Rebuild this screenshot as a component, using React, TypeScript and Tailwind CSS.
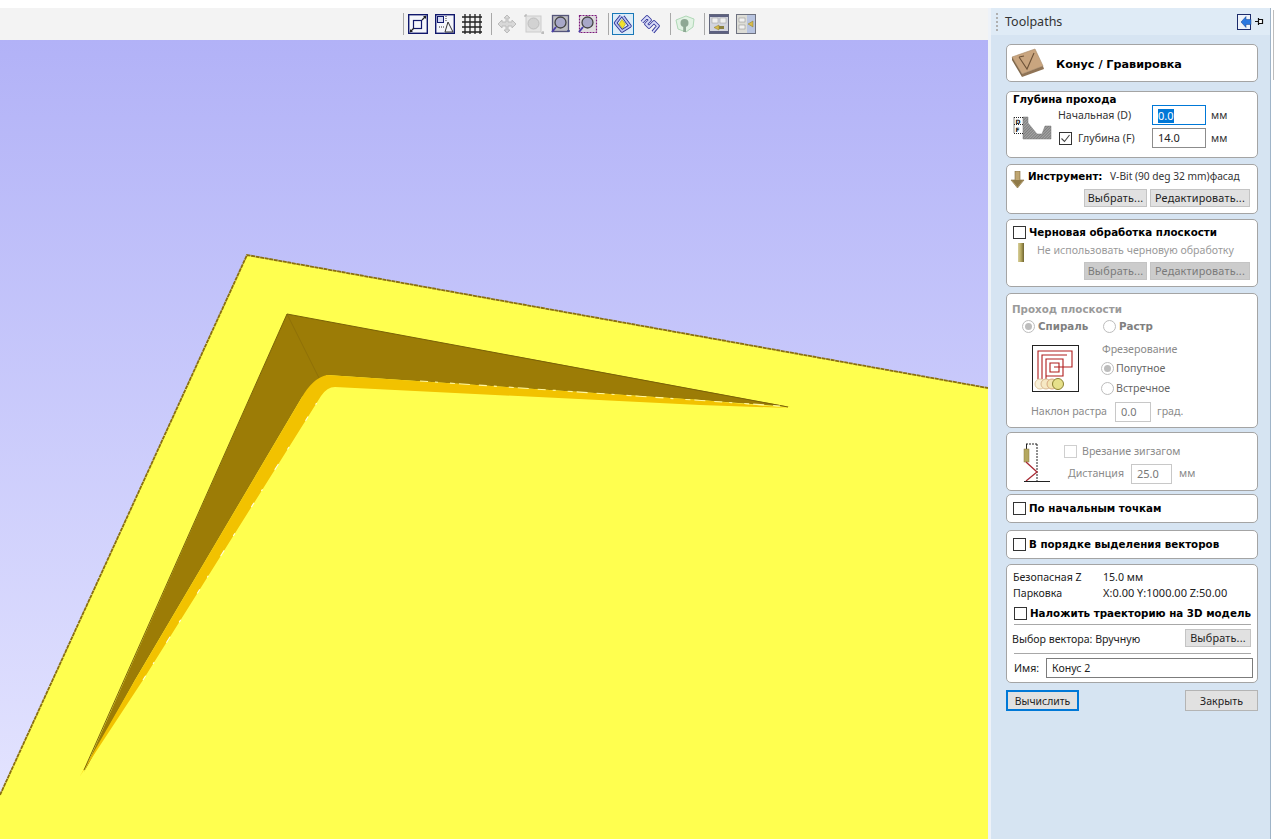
import React from "react";

const font = "font-['Noto_Sans','Liberation_Sans',sans-serif]";

function Sep() {
  return <div className="w-px h-[22px] bg-[#a8a8a8] self-center" />;
}

function Ic({ children, w = 20, className = "" }: { children: React.ReactNode; w?: number; className?: string }) {
  return (
    <svg width={w} height={20} viewBox={`0 0 ${w} 20`} className={"shrink-0 " + className}>
      {children}
    </svg>
  );
}

function Toolbar() {
  return (
    <div className="h-8 flex items-center pl-[403px] bg-[#f3f3f3]">
      <Sep />
      <div className="flex items-center gap-[7px] ml-[4px]">
        <Ic>
          <rect x="0.7" y="0.7" width="18.6" height="18.6" fill="#f4f6fb" stroke="#10186c" strokeWidth="1.4" />
          <rect x="5.500" y="6.500" width="8" height="8" fill="none" stroke="#10186c" strokeWidth="1.2" />
          <path d="M2 18l4-4M14 6l4-4" stroke="#222" strokeWidth="1.2" />
          <path d="M2 18v-3l3 3zM18 2v3l-3-3z" fill="#222" />
        </Ic>
        <Ic>
          <rect x="0.7" y="0.7" width="18.6" height="18.6" fill="#f4f6fb" stroke="#10186c" strokeWidth="1.4" />
          <rect x="2.500" y="2.500" width="6" height="6" fill="#d5daf2" stroke="#10186c" />
          <path d="M13 8l-3 10h8z" fill="none" stroke="#333" />
          <path d="M11 2v6M4 13h5" stroke="#333" strokeDasharray="1 1" />
        </Ic>
        <Ic>
          <path d="M3 0v20M8 0v20M13 0v20M18 0v20M0 3h20M0 8h20M0 13h20M0 18h20" stroke="#222" strokeWidth="1.3" />
        </Ic>
      </div>
      <div className="ml-[9px]"><Sep /></div>
      <div className="flex items-center gap-[7px] ml-[5px]">
        <Ic>
          <path d="M10 1l3 3h-2v4h4V6l4 4-4 4v-2h-4v4h2l-3 3-3-3h2v-4H5v2l-4-4 4-4v2h4V4H7z" fill="#d8d8d8" stroke="#bcbcbc" />
        </Ic>
        <Ic>
          <rect x="2" y="2" width="15" height="16" fill="#e4e4e4" stroke="#cccccc" />
          <circle cx="9.500" cy="9.500" r="5.500" fill="#d2d2d2" stroke="#bdbdbd" />
          <path d="M0 2h2M2 0v2M17 19h3M19 17v3" stroke="#aaa" />
        </Ic>
        <Ic>
          <rect x="1.500" y="1.500" width="16" height="16" fill="#bdbdc2" stroke="#55557a" strokeWidth="1.300" />
          <circle cx="9.500" cy="8.500" r="5.500" fill="#a8a8c8" stroke="#444" strokeWidth="1.300" />
          <path d="M5 13l-4 5" stroke="#4a3fa8" strokeWidth="2" />
          <path d="M16 17h3" stroke="#44508f" strokeWidth="1.500" />
        </Ic>
        <Ic>
          <rect x="1.500" y="1.500" width="17" height="17" fill="#e0dde0" stroke="#7d1a7d" strokeWidth="1.200" strokeDasharray="2 1" />
          <circle cx="9.500" cy="8.500" r="5.500" fill="#a8a8c8" stroke="#444" strokeWidth="1.300" />
          <path d="M5 13l-4 5" stroke="#4a3fa8" strokeWidth="2" />
        </Ic>
      </div>
      <div className="ml-[10px]"><Sep /></div>
      <div className="ml-[3px] w-[22px] h-[22px] border border-[#1878b8] bg-[#dcecf8] flex items-center justify-center">
        <svg width="20" height="20" viewBox="0 0 20 20">
          <path d="M8 2L2.500 9L9 17L17 12L14 8L10 2.500" fill="none" stroke="#23288c" strokeWidth="3.400" strokeLinejoin="round" />
          <path d="M8 2L2.500 9L9 17L17 12L14 8L10 2.500" fill="none" stroke="#b9c3f2" strokeWidth="1.800" strokeLinejoin="round" />
          <path d="M9 5.500l3.500 4.500-3 4.500-3.500-4.500z" fill="#f2e22c" stroke="#a89c1c" strokeWidth=".6" />
        </svg>
      </div>
      <div className="ml-[6px]">
        <Ic>
          <path d="M2 8L7 3L10 6L6 10L9 13L14 8L18 12L13 18" fill="none" stroke="#35399c" strokeWidth="3.600" strokeLinejoin="round" />
          <path d="M2 8L7 3L10 6L6 10L9 13L14 8L18 12L13 18" fill="none" stroke="#d8dcf8" strokeWidth="1.800" strokeLinejoin="round" />
        </Ic>
      </div>
      <div className="ml-[10px]"><Sep /></div>
      <div className="ml-[4px]">
        <Ic>
          <path d="M1 6l10-4 8 3-1 8-7 5-8-3z" fill="#e2f2e4" stroke="#afd8b6" />
          <circle cx="9.500" cy="9" r="4" fill="#8ea894" />
          <rect x="8.200" y="12" width="2.800" height="6" fill="#8ea894" />
        </Ic>
      </div>
      <div className="ml-[9px]"><Sep /></div>
      <div className="flex items-center gap-[7px] ml-[4px]">
        <Ic>
          <rect x="0.500" y="0.500" width="19" height="19" fill="#d2d4de" stroke="#62667c" />
          <rect x="1" y="1" width="18" height="2" fill="#5c6080" />
          <rect x="3" y="4" width="6" height="5" fill="#f0f0f0" stroke="#999" strokeWidth=".5" />
          <rect x="11" y="4" width="6" height="5" fill="#f0f0f0" stroke="#999" strokeWidth=".5" />
          <path d="M5 13.500l5-2.500v5z" fill="#d8bc4a" stroke="#8a7a30" strokeWidth=".5" />
          <rect x="10" y="12" width="5" height="3" fill="#8a8040" />
          <rect x="1" y="17" width="18" height="2" fill="#5c6080" />
        </Ic>
        <Ic>
          <rect x="0.500" y="0.500" width="19" height="19" fill="#b8c4e0" stroke="#6e7280" />
          <rect x="1" y="1" width="10" height="18" fill="#dcdcd6" />
          <rect x="3" y="4" width="6" height="4" fill="#f2f2f2" stroke="#888" strokeWidth=".5" />
          <rect x="3" y="11" width="6" height="4" fill="#f2f2f2" stroke="#888" strokeWidth=".5" />
          <path d="M12 10l5-3v6z" fill="#d8bc4a" stroke="#8a7a30" strokeWidth=".5" />
        </Ic>
      </div>
    </div>
  );
}

function Viewport() {
  return (
    <div className="relative flex-1 bg-gradient-to-b from-[#b2b2f7] to-[#e6e6ff] overflow-hidden">
      <svg width="988" height="799" viewBox="0 40 988 799" className="block">
        <polygon points="247,255 988,388 988,839 0,839 0,795" fill="#ffff4f" />
        <path d="M0 795L247 255L988 388" fill="none" stroke="#8a6f10" strokeWidth="1.800" strokeDasharray="4 0.600" />
        <polygon points="287,314 790,407 700,400 327,375 302,397 135,680 84,772" fill="#9c7c06" />
        <path d="M287 314L319 378" stroke="#8a6c06" strokeWidth="1" opacity=".7" />
        <path d="M80 776L135 680L302 397Q313 378 327 375L700 400L790 408L700 405L335 387Q327 387 321 396L143 680Z" fill="#f2c200" />
        <path d="M287 314L84 770M287 314L788 407" stroke="#7a6208" strokeWidth="1" fill="none" />
        <path d="M143 680L321 396" stroke="#fffde0" strokeWidth="1.100" strokeDasharray="5 14 2 23 7 17 3 31" fill="none" />
        <path d="M420 381L780 406" stroke="#fff6a0" strokeWidth="1.100" strokeDasharray="8 7 3 12 5 4 11 9" fill="none" />
      </svg>
    </div>
  );
}

function Card({ className = "", children }: { className?: string; children: React.ReactNode }) {
  return <div className={"ml-[15px] w-[252px] bg-white border border-[#a4a4a4] rounded-[5px] " + className}>{children}</div>;
}

function Check({ checked = false, dim = false }: { checked?: boolean; dim?: boolean }) {
  return (
    <span className={"w-[13px] h-[13px] border shrink-0 bg-white flex items-center justify-center " + (dim ? "border-[#cfcfcf]" : "border-[#333]")}>
      {checked && (
        <svg width="11" height="11" viewBox="0 0 11 11">
          <path d="M1.500 5.500l3 3 5-6.500" fill="none" stroke="#444" strokeWidth="1.100" />
        </svg>
      )}
    </span>
  );
}

function Radio({ on = false }: { on?: boolean }) {
  return (
    <span className="w-[13px] h-[13px] rounded-full border border-[#bdbdbd] bg-white shrink-0 flex items-center justify-center">
      {on && <span className="w-[7px] h-[7px] rounded-full bg-[#bdbdbd]" />}
    </span>
  );
}

function Btn({ children, className = "", dim = false }: { children: React.ReactNode; className?: string; dim?: boolean }) {
  return (
    <div className={"h-[18px] flex items-center justify-center border text-[10.8px] tracking-[0.2px] leading-none " + (dim ? "bg-[#cccccc] border-[#c4c4c4] text-[#7a7a7a] " : "bg-[#e1e1e1] border-[#c4c4c4] text-[#222] ") + className}>
      {children}
    </div>
  );
}

function Panel() {
  const bold = "font-['DejaVu_Sans',sans-serif] font-bold text-[10.3px] leading-none whitespace-nowrap";
  return (
    <div className="w-[283px] h-[831px] mt-2 bg-[#d6e4f2] border-l-[3px] border-l-[#eef2f8] border-r border-r-[#9fb4c8] shrink-0 text-[10.6px] text-[#222]">
      <div className="h-[27px] bg-[#dfebf6] flex items-center pl-[5px] relative">
        <div className="w-[2px] h-[18px] border-l-2 border-dotted border-[#b0b0b0]" />
        <span className="ml-[7px] pt-[2px] text-[12.500px] text-[#333]">Toolpaths</span>
        <svg width="15" height="16" viewBox="0 0 15 16" className="absolute left-[246px] top-[6px]">
          <rect x="0.500" y="0.500" width="13" height="15" fill="#eef3fa" stroke="#1c2c6c" />
          <path d="M14 5.500H9V2.500L4 8l5 5.500V10.500h5z" fill="#2a78e0" stroke="#14408c" strokeWidth=".5" />
        </svg>
        <svg width="9" height="9" viewBox="0 0 9 9" className="absolute left-[264px] top-[9px]">
          <path d="M0 4.500h3M3.500 2.500h4v4h-4zM3.500 1v7" fill="#fff" stroke="#111" strokeWidth="1.200" />
        </svg>
      </div>

      <Card className="mt-[9px] h-[38px] flex items-center">
        <svg width="34" height="30" viewBox="0 0 34 30" className="ml-[4px] shrink-0">
          <path d="M1 9L24 1L32 18L11 26Z" fill="#c9a57f" stroke="#a88a68" strokeWidth=".6" />
          <path d="M1 9L1 12L11 29L11 26Z" fill="#7f6648" />
          <path d="M11 26L32 18L33 21L11 29Z" fill="#8f7355" />
          <path d="M8 9L16 21L23 5M8 9L13 8" fill="none" stroke="#6d5238" strokeWidth="1.100" />
        </svg>
        <span className="ml-[11px] pt-[4px] font-['DejaVu_Sans',sans-serif] font-bold text-[11.2px] text-black">Конус / Гравировка</span>
      </Card>

      <Card className="mt-[9px] h-[67px] relative">
        <div className={bold + " absolute left-[6px] top-[2px] text-black"}>Глубина прохода</div>
        <svg width="39" height="25" viewBox="0 0 39 25" className="absolute left-[6px] top-[24px]">
          <defs>
            <pattern id="hatch" width="2" height="2" patternUnits="userSpaceOnUse" patternTransform="rotate(45)">
              <rect width="2" height="2" fill="#a6a6a6" />
              <rect width="1" height="2" fill="#7e7e7e" />
            </pattern>
          </defs>
          <path d="M10 1H15V7L24 18H29L32 10H38V23H10Z" fill="url(#hatch)" stroke="#777" strokeWidth=".5" />
          <path d="M1 1.500H10M1 8.500H10M1 17.500H10M1 1.500V17.500" stroke="#222" strokeDasharray="1 1" fill="none" />
          <text x="2.500" y="7.500" fontSize="6" fontWeight="700" fill="#111" fontFamily="DejaVu Sans">D</text>
          <text x="2.500" y="15.500" fontSize="6" fontWeight="700" fill="#111" fontFamily="DejaVu Sans">F</text>
        </svg>
        <div className="absolute left-[51px] top-[13px] w-[196px] flex items-center h-[20px]">
          <span className="w-[94px] pt-[2px] text-[#333]">Начальная (D)</span>
          <span className="w-[54px] h-[20px] border border-[#0078d7] bg-white flex items-center pl-[5px] pt-[1px]"><span className="bg-[#0078d7] text-white leading-[14px] text-[11px]">0.0</span></span>
          <span className="ml-[5px] pt-[2px] text-[#333]">мм</span>
        </div>
        <div className="absolute left-[52px] top-[36px] w-[196px] flex items-center h-[20px]">
          <Check checked />
          <span className="ml-[6px] w-[74px] pt-[2px] text-[#333]">Глубина (F)</span>
          <span className="w-[54px] h-[20px] border border-[#8c8c8c] bg-white flex items-center pl-[5px] text-[11px]">14.0</span>
          <span className="ml-[5px] pt-[2px] text-[#333]">мм</span>
        </div>
      </Card>

      <Card className="mt-[6px] h-[50px] relative">
        <svg width="15" height="18" viewBox="0 0 15 18" className="absolute left-[3px] top-[6px]">
          <path d="M5 0h5v9h4l-6.500 8L1 9h4z" fill="#bfa672" stroke="#7c6a3c" strokeWidth=".6" />
          <path d="M2 9h11l-5.500 7z" fill="#8f7a48" />
        </svg>
        <div className={bold + " absolute left-[21px] top-[6px] text-black"}>Инструмент:</div>
        <span className="absolute left-[103px] top-[4px] text-[10.2px] text-[#333] whitespace-nowrap">V-Bit (90 deg 32 mm)фасад</span>
        <div className="absolute left-[77px] top-[24px] flex gap-[3px]">
          <Btn className="w-[63px]">Выбрать...</Btn>
          <Btn className="w-[100px]">Редактировать...</Btn>
        </div>
      </Card>

      <Card className="mt-[5px] h-[68px] relative">
        <div className="absolute left-[6px] top-[6px] flex items-center gap-[3px]">
          <Check />
          <span className={bold + " text-black"}>Черновая обработка плоскости</span>
        </div>
        <div className="absolute left-[11px] top-[23px] w-[6px] h-[19px] bg-gradient-to-r from-[#d8cf9a] via-[#b5a860] to-[#6f6430]" />
        <span className="absolute left-[30px] top-[23px] text-[#9a9a9a] whitespace-nowrap">Не использовать черновую обработку</span>
        <div className="absolute left-[77px] top-[42px] flex gap-[3px]">
          <Btn dim className="w-[63px]">Выбрать...</Btn>
          <Btn dim className="w-[100px]">Редактировать...</Btn>
        </div>
      </Card>

      <Card className="mt-[6px] h-[135px] relative text-[#8a8a8a]">
        <div className={bold + " absolute left-[5px] top-[10px] text-[#9a9a9a]"}>Проход плоскости</div>
        <div className="absolute left-[15px] top-[26px] flex items-center gap-[3px]">
          <Radio on />
          <span className={bold + " text-[#808080] w-[47px]"}>Спираль</span>
          <span className="ml-[15px]"><Radio /></span>
          <span className={bold + " text-[#808080]"}>Растр</span>
        </div>
        <svg width="48" height="48" viewBox="0 0 48 48" className="absolute left-[25px] top-[51px]">
          <rect x=".5" y=".5" width="46" height="46" fill="#fff" stroke="#222" />
          <path d="M22 22H40V6H6V34M10 34V10H35M14 34V14H31V31H14M18 18H27V27H18Z" fill="none" stroke="#b01c1c" strokeWidth="1.100" />
          <circle cx="8" cy="39" r="5" fill="#f8f0d8" stroke="#e0c8a0" />
          <circle cx="14" cy="39" r="5" fill="#f6e8c4" stroke="#d8b890" />
          <circle cx="20" cy="39" r="5" fill="#f2e4b0" stroke="#d8a880" />
          <circle cx="26" cy="39" r="5.500" fill="#e6e08a" stroke="#8a8030" />
        </svg>
        <span className="absolute left-[95px] top-[48px]">Фрезерование</span>
        <div className="absolute left-[94px] top-[67px] flex items-center gap-[2px]"><Radio on /><span className="text-[#666]">Попутное</span></div>
        <div className="absolute left-[94px] top-[87px] flex items-center gap-[2px]"><Radio /><span className="text-[#666]">Встречное</span></div>
        <div className="absolute left-[24px] top-[108px] flex items-center">
          <span className="w-[84px] whitespace-nowrap">Наклон растра</span>
          <span className="w-[36px] h-[20px] border border-[#c8c8c8] flex items-center pl-[5px] text-[#777] text-[11px]">0.0</span>
          <span className="ml-[6px]">град.</span>
        </div>
      </Card>

      <Card className="mt-[4px] h-[59px] relative text-[#8a8a8a]">
        <svg width="30" height="42" viewBox="0 0 30 42" className="absolute left-[16px] top-[8px]">
          <path d="M3 3H15M14 3V40" stroke="#222" strokeDasharray="2 1" fill="none" />
          <path d="M3.500 3v5" stroke="#222" />
          <rect x="1" y="8" width="5" height="13" fill="#b5a860" stroke="#8a7a40" strokeWidth=".5" />
          <path d="M3 21L14 31L3 40" fill="none" stroke="#a82a34" strokeWidth="1.300" />
          <path d="M1 40.500H27" stroke="#222" />
        </svg>
        <div className="absolute left-[57px] top-[11px] flex items-center gap-[5px]"><Check dim /><span>Врезание зигзагом</span></div>
        <div className="absolute left-[61px] top-[31px] flex items-center">
          <span className="w-[63px]">Дистанция</span>
          <span className="w-[41px] h-[20px] border border-[#c8c8c8] flex items-center pl-[5px] text-[#777] text-[11px]">25.0</span>
          <span className="ml-[7px]">мм</span>
        </div>
      </Card>

      <Card className="mt-[3px] h-[29px] flex items-center pl-[6px] gap-[3px]">
        <Check />
        <span className={bold + " text-black"}>По начальным точкам</span>
      </Card>

      <Card className="mt-[7px] h-[29px] flex items-center pl-[6px] gap-[3px]">
        <Check />
        <span className={bold + " text-black"}>В порядке выделения векторов</span>
      </Card>

      <Card className="mt-[5px] h-[119px] relative">
        <span className="absolute left-[6px] top-[5px]">Безопасная Z</span>
        <span className="absolute left-[96px] top-[5px]">15.0 мм</span>
        <span className="absolute left-[6px] top-[21px]">Парковка</span>
        <span className="absolute left-[96px] top-[20px] text-[11px] whitespace-nowrap">X:0.00 Y:1000.00 Z:50.00</span>
        <div className="absolute left-[7px] top-[42px] flex items-center gap-[3px]">
          <Check />
          <span className={bold + " text-black"}>Наложить траекторию на 3D модель</span>
        </div>
        <div className="absolute left-[7px] right-[6px] top-[59px] h-px bg-[#a8a8a8]" />
        <span className="absolute left-[5px] top-[67px] whitespace-nowrap">Выбор вектора: Вручную</span>
        <Btn className="absolute left-[178px] top-[64px] w-[66px]">Выбрать...</Btn>
        <div className="absolute left-[7px] right-[6px] top-[88px] h-px bg-[#a8a8a8]" />
        <span className="absolute left-[7px] top-[96px]">Имя:</span>
        <div className="absolute left-[39px] top-[93px] w-[207px] h-[20px] border border-[#7c7c7c] flex items-center pl-[5px] pt-[2px]">Конус 2</div>
      </Card>

      <div className="ml-[15px] w-[252px] mt-[7px] flex justify-between">
        <div className="w-[73px] h-[21px] border-2 border-[#0078d7] bg-[#e1e1e1] flex items-center justify-center pt-[2px] text-[10.4px]">Вычислить</div>
        <div className="w-[73px] h-[21px] border border-[#b4b4b4] bg-[#e1e1e1] flex items-center justify-center pt-[2px] text-[10.6px]">Закрыть</div>
      </div>
    </div>
  );
}

export default function App() {
  return (
    <div className={"w-[1275px] h-[839px] bg-white flex overflow-hidden " + font}>
      <div className="w-[988px] h-full flex flex-col pt-2 shrink-0">
        <Toolbar />
        <Viewport />
      </div>
      <Panel />
      <div className="w-[2px] h-[70px] mt-[10px] ml-[2px] bg-white border-l border-[#bdbdbd]" />
    </div>
  );
}
